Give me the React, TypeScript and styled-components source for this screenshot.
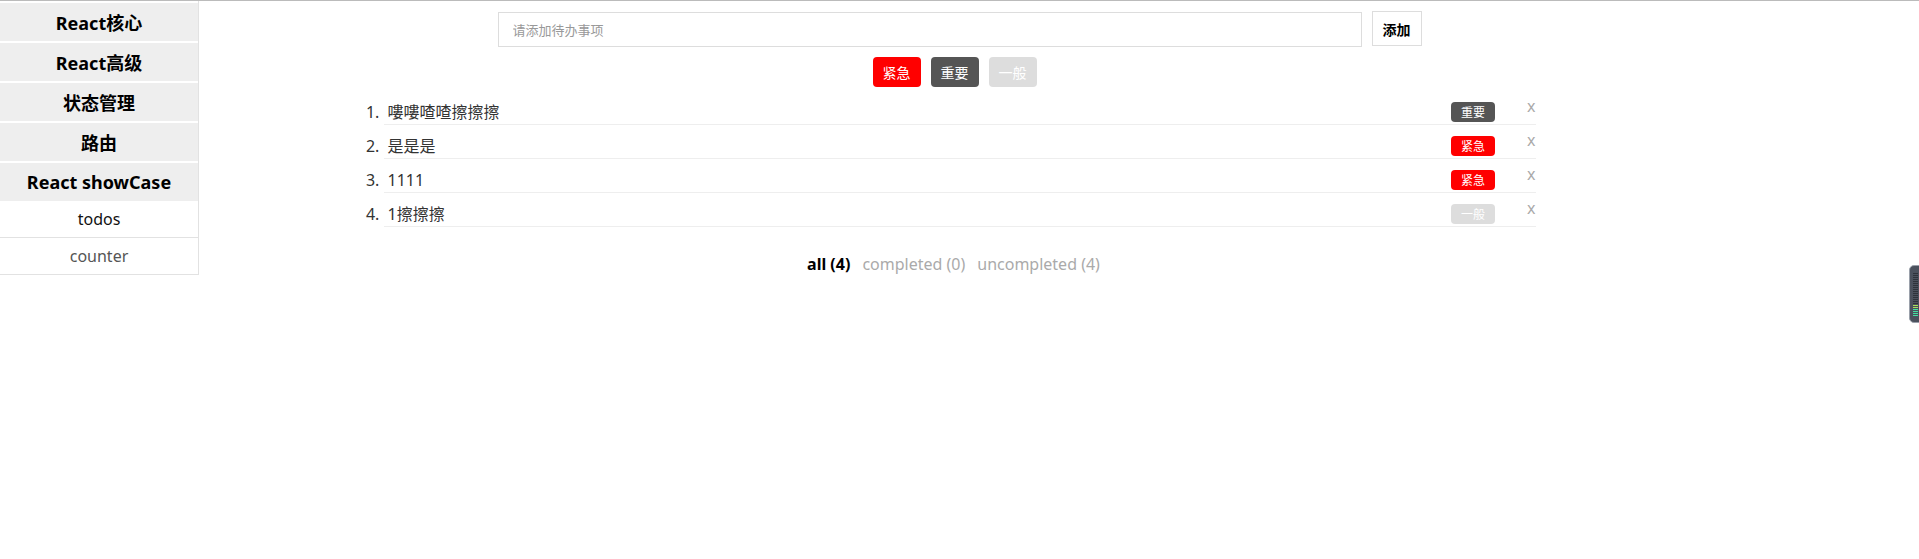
import React from "react";
import styled, { createGlobalStyle, css } from "styled-components";

const GlobalStyle = createGlobalStyle`
  html, body {
    margin: 0;
    padding: 0;
    background: #fff;
  }
  body {
    border-top: 1px solid #bbbbbb;
    font-family: "Noto Sans", "Noto Sans CJK SC", sans-serif;
    color: #333;
  }
  * { box-sizing: border-box; }
`;

const Page = styled.div`
  display: grid;
  grid-template-columns: 199px 1fr 199px;
  align-items: start;
`;

const Sidebar = styled.nav`
  display: flex;
  flex-direction: column;
  border-right: 1px solid #e2e2e2;
`;

const NavGroup = styled.div`
  height: 38px;
  margin-top: 2px;
  background: #eeeeee;
  display: flex;
  align-items: center;
  justify-content: center;
  font-size: 18px;
  font-weight: 700;
  color: #000;
`;

const SubItem = styled.div<{ $active?: boolean }>`
  height: 37px;
  border-bottom: 1px solid #e2e2e2;
  display: flex;
  align-items: center;
  justify-content: center;
  font-size: 16px;
  color: ${(p) => (p.$active ? "#111" : "#555")};
`;

const Main = styled.main`
  display: flex;
  flex-direction: column;
  align-items: center;
  padding-top: 10px;
`;

const InputRow = styled.div`
  display: flex;
  align-items: flex-start;
  gap: 10px;
`;

const TodoInput = styled.input`
  width: 864px;
  height: 35px;
  margin-top: 1px;
  border: 1px solid #dddddd;
  padding: 0 14px;
  font-family: "Noto Sans", "Noto Sans CJK SC", sans-serif;
  font-size: 13px;
  color: #333;
  outline: none;
  &::placeholder {
    color: #999;
  }
`;

const AddButton = styled.button`
  height: 35px;
  padding: 0 10px;
  background: #fff;
  border: 1px solid #dddddd;
  font-family: "Noto Sans", "Noto Sans CJK SC", sans-serif;
  font-size: 14px;
  font-weight: 700;
  color: #000;
`;

type Level = "urgent" | "important" | "normal";

const levelColor: Record<Level, string> = {
  urgent: "#ff0000",
  important: "#555555",
  normal: "#dddddd",
};

const PriorityRow = styled.div`
  display: flex;
  margin-top: 10px;
`;

const PriorityButton = styled.button<{ $level: Level }>`
  height: 30px;
  padding: 0 10px;
  margin-right: 10px;
  border: none;
  border-radius: 4px;
  font-family: "Noto Sans", "Noto Sans CJK SC", sans-serif;
  font-size: 14px;
  color: #fff;
  background: ${(p) => levelColor[p.$level]};
`;

const TodoList = styled.ol`
  width: 1152px;
  margin: 4px 0 0;
  padding: 0;
  list-style: decimal outside;
`;

const TodoItem = styled.li`
  height: 34px;
  border-bottom: 1px solid #eeeeee;
  font-size: 16px;
  color: #333;
  &::marker {
    color: #333;
  }
`;

const Row = styled.div`
  display: flex;
  align-items: center;
  height: 100%;
  padding-top: 9px;
`;

const TodoText = styled.span`
  flex: 1;
  padding-left: 4px;
  font-size: 16px;
  line-height: 22px;
`;

const Tag = styled.span<{ $level: Level }>`
  height: 20px;
  padding: 0 10px;
  margin-right: 32px;
  border-radius: 4px;
  display: inline-flex;
  align-items: center;
  font-size: 12px;
  color: #fff;
  background: ${(p) => levelColor[p.$level]};
`;

const DeleteButton = styled.span`
  align-self: flex-start;
  margin-top: -5px;
  font-size: 16px;
  line-height: 22px;
  color: #aaaaaa;
  cursor: pointer;
`;

const Filters = styled.div`
  display: flex;
  margin-top: 26px;
`;

const FilterLink = styled.span<{ $active?: boolean }>`
  margin-right: 12px;
  font-size: 16px;
  line-height: 22px;
  ${(p) =>
    p.$active
      ? css`
          font-weight: 700;
          color: #000;
        `
      : css`
          color: #aaaaaa;
        `}
`;

const Widget = styled.div`
  position: fixed;
  right: -6px;
  top: 265px;
  width: 16px;
  height: 58px;
  border-radius: 5px;
  background: #4b515d;
  border: 1px solid #9aa0aa;
  display: flex;
  justify-content: flex-start;
  padding: 7px 0 0 3px;
`;

const navGroups = ["React核心", "React高级", "状态管理", "路由", "React showCase"];

const todos: { text: string; level: Level; label: string }[] = [
  { text: "嘍嘍喳喳擦擦擦", level: "important", label: "重要" },
  { text: "是是是", level: "urgent", label: "紧急" },
  { text: "1111", level: "urgent", label: "紧急" },
  { text: "1擦擦擦", level: "normal", label: "一般" },
];

const priorities: { level: Level; label: string }[] = [
  { level: "urgent", label: "紧急" },
  { level: "important", label: "重要" },
  { level: "normal", label: "一般" },
];

function WidgetBars() {
  const bars = [];
  for (let i = 0; i < 22; i++) {
    const y = i * 2;
    let color = "#2f333b";
    if (i >= 16 && i < 18) color = "#a6e05a";
    else if (i >= 18) color = "#43e0a0";
    bars.push(<rect key={i} x={0} y={y} width={5} height={1} fill={color} />);
  }
  return (
    <svg width="5" height="44" viewBox="0 0 5 44">
      {bars}
    </svg>
  );
}

export default function App() {
  return (
    <>
      <GlobalStyle />
      <Page>
        <Sidebar>
          {navGroups.map((g) => (
            <NavGroup key={g}>{g}</NavGroup>
          ))}
          <SubItem $active>todos</SubItem>
          <SubItem>counter</SubItem>
        </Sidebar>
        <Main>
          <InputRow>
            <TodoInput placeholder="请添加待办事项" />
            <AddButton>添加</AddButton>
          </InputRow>
          <PriorityRow>
            {priorities.map((p) => (
              <PriorityButton key={p.level} $level={p.level}>
                {p.label}
              </PriorityButton>
            ))}
          </PriorityRow>
          <TodoList>
            {todos.map((t, i) => (
              <TodoItem key={i}>
                <Row>
                  <TodoText>{t.text}</TodoText>
                  <Tag $level={t.level}>{t.label}</Tag>
                  <DeleteButton>x</DeleteButton>
                </Row>
              </TodoItem>
            ))}
          </TodoList>
          <Filters>
            <FilterLink $active>all (4)</FilterLink>
            <FilterLink>completed (0)</FilterLink>
            <FilterLink>uncompleted (4)</FilterLink>
          </Filters>
        </Main>
        <div />
      </Page>
      <Widget>
        <WidgetBars />
      </Widget>
    </>
  );
}
